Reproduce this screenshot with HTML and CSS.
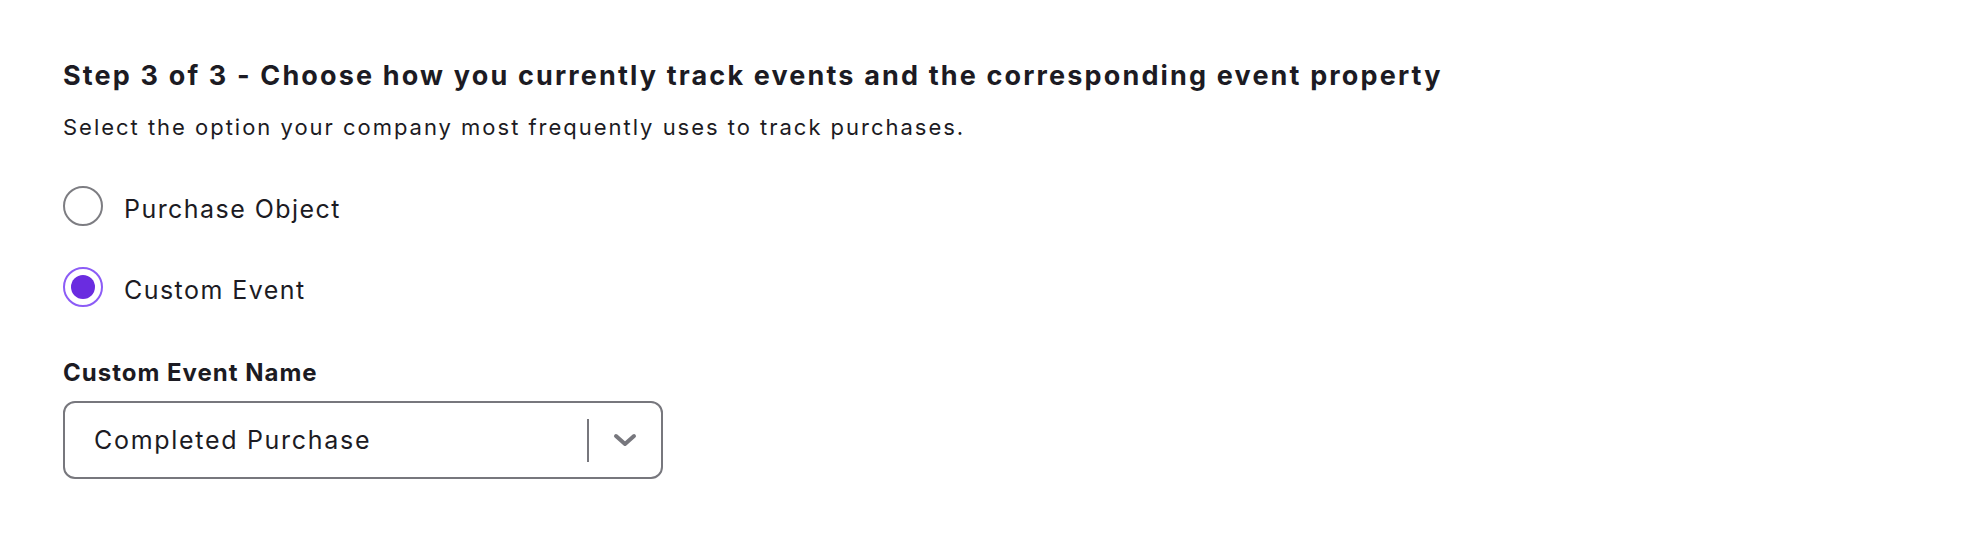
FILE: index.html
```html
<!DOCTYPE html>
<html lang="en">
<head>
  <meta charset="UTF-8" />
  <title>Purchase Tracking - Step 3</title>
  <meta name="viewport" content="width=device-width, initial-scale=1" />
  <link rel="stylesheet" href="styles.css">
</head>
<body>

  <div class="step">
    <h2 class="step-title">Step 3 of 3 - Choose how you currently track events and the corresponding event property</h2>
    <p class="step-desc">Select the option your company most frequently uses to track purchases.</p>

    <!-- Tracking method -->
    <div class="radio-group">
      <label class="radio-row">
        <span class="radio"></span>
        <span class="radio-label">Purchase Object</span>
      </label>
      <label class="radio-row">
        <span class="radio checked"></span>
        <span class="radio-label">Custom Event</span>
      </label>
    </div>

    <!-- Event name select -->
    <div class="field">
      <div class="field-label">Custom Event Name</div>
      <div class="select">
        <span class="select-value">Completed Purchase</span>
        <span class="select-sep"></span>
        <span class="select-arrow">
          <svg width="24" height="14" viewBox="0 0 24 14">
            <path d="M3 3 L12 11 L21 3" fill="none" stroke="#77777d" stroke-width="4" stroke-linecap="round" stroke-linejoin="round"/>
          </svg>
        </span>
      </div>
    </div>
  </div>

</body>
</html>
```

FILE: styles.css
```css
body {
  margin: 0;
  padding: 58px 0 0 63px;
  font-family: Inter, 'Noto Sans', sans-serif;
  background: #ffffff;
  color: #1c1b23;
}

.step {
  display: flex;
  flex-direction: column;
}

.step-title {
  margin: 0;
  font-size: 27px;
  line-height: 36px;
  font-weight: 700;
  letter-spacing: 2.15px;
}

.step-desc {
  margin: 18px 0 0;
  font-size: 22px;
  line-height: 30px;
  letter-spacing: 1.98px;
}

/* Radios */
.radio-group {
  margin-top: 41px;
  display: flex;
  flex-direction: column;
  gap: 35px;
}

.radio-row {
  display: flex;
  align-items: center;
  gap: 21px;
}

.radio {
  width: 40px;
  height: 40px;
  box-sizing: border-box;
  border: 2px solid #7d7d82;
  border-radius: 50%;
  display: flex;
  align-items: center;
  justify-content: center;
}

.radio.checked {
  border-color: #8c5cf6;
}

.radio.checked::after {
  content: "";
  width: 24px;
  height: 24px;
  border-radius: 50%;
  background: #6a2ce0;
}

.radio-label {
  font-size: 25px;
  line-height: 40px;
  padding-top: 6px;
  letter-spacing: 1.45px;
}

/* Select field */
.field {
  margin-top: 48px;
}

.field-label {
  font-size: 24px;
  line-height: 30px;
  font-weight: 700;
  letter-spacing: 1px;
}

.select {
  margin-top: 13px;
  width: 600px;
  height: 78px;
  box-sizing: border-box;
  border: 2px solid #77777d;
  border-radius: 12px;
  display: flex;
  align-items: center;
  padding-left: 29px;
}

.select-value {
  flex: 1;
  font-size: 25px;
  letter-spacing: 1.7px;
}

.select-sep {
  width: 2px;
  height: 43px;
  background: #77777d;
}

.select-arrow {
  width: 72px;
  display: flex;
  justify-content: center;
}
```
